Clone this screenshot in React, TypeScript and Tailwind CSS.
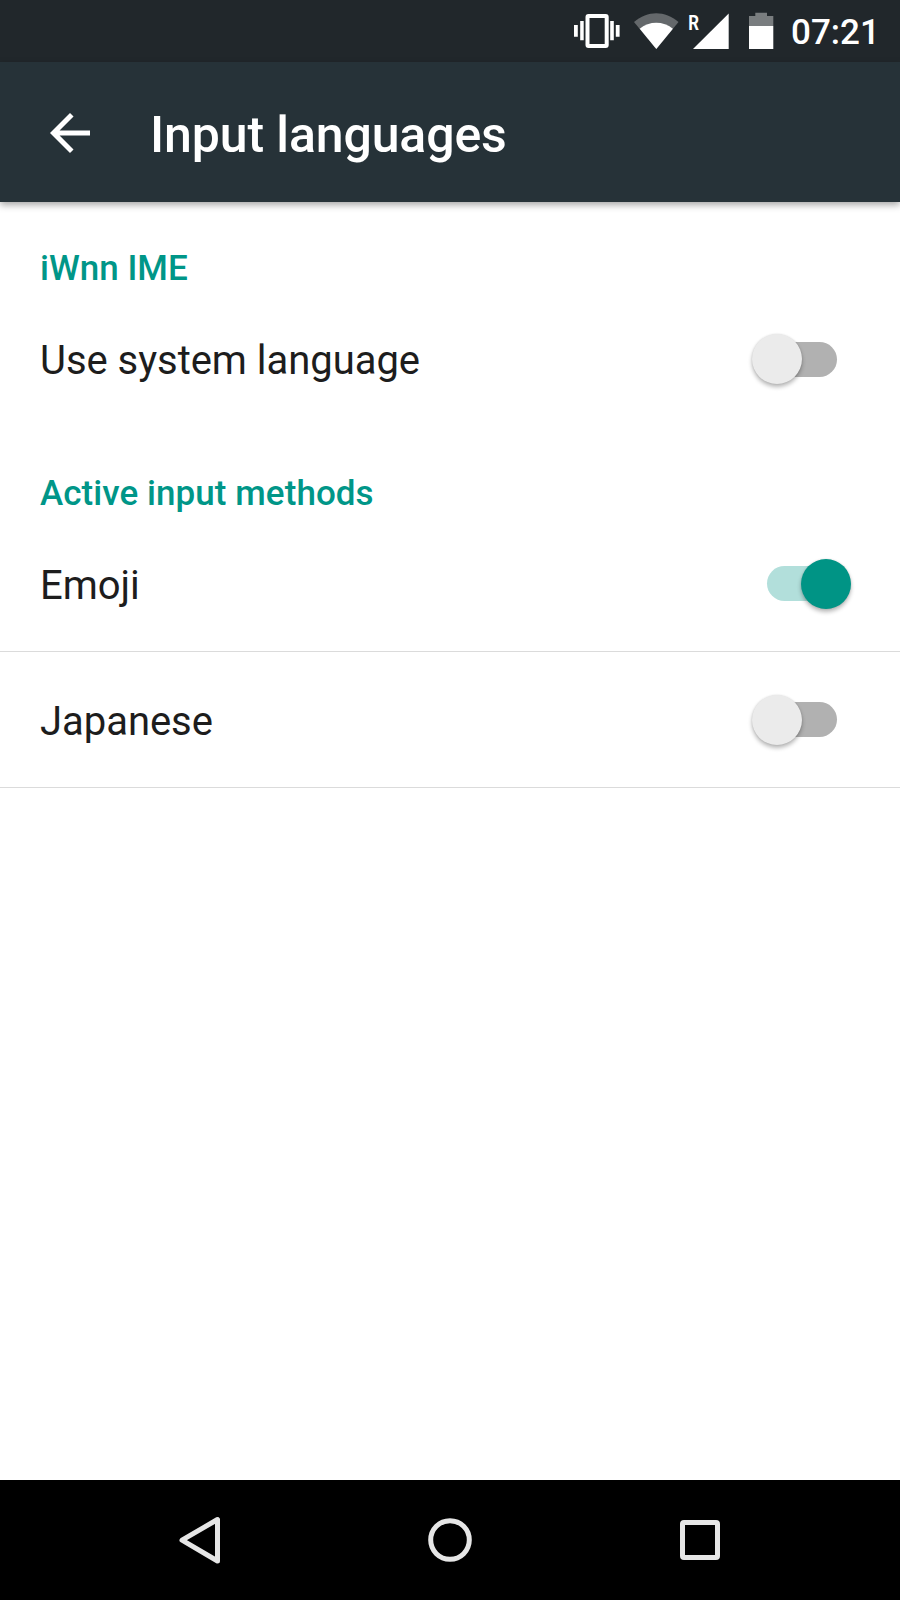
import React, { useState } from "react";

function StatusIcons() {
  return (
    <>
      <svg className="h-[62px] w-12 shrink-0" viewBox="573 0 48 62" fill="#fff">
        <path fillRule="evenodd" d="M588.500 14H605.700A3 3 0 0 1 608.700 17V45A3 3 0 0 1 605.700 48H588.500A3 3 0 0 1 585.500 45V17A3 3 0 0 1 588.500 14ZM589.500 18V44H604.700V18Z" />
        <path d="M580.200 21h3.500v19.300h-3.500zM574 25h3.800v11.700h-3.800zM610.200 21h3.600v19.300h-3.600zM615.800 25h3.800v11.700h-3.800z" />
      </svg>
      <svg className="ml-3 h-[62px] w-[46px] shrink-0" viewBox="633 0 46 62">
        <path d="M656.3 49L634 22C647.5 10.300 665 10.300 678.500 22Z" fill="#64686b" />
        <path d="M656.3 49L639.700 28.700C649.500 20.800 663 20.800 672.900 28.700Z" fill="#fff" />
      </svg>
      <svg className="ml-2 h-[62px] w-[43px] shrink-0" viewBox="687 0 43 62" fill="#fff">
        <text x="0" y="0" transform="translate(688.200 29.500) scale(0.820 1)" fontFamily="Roboto, sans-serif" fontWeight="700" fontSize="20.500">R</text>
        <path d="M693 49H728.700V13.500Z" />
      </svg>
      <svg className="ml-[18px] h-[62px] w-[27px] shrink-0" viewBox="748 0 27 62">
        <path d="M755.300 12.700H767V16H773.300V26H749V16H755.300Z" fill="#797d7f" />
        <path d="M749 26H773.300V49H749Z" fill="#fff" />
      </svg>
    </>
  );
}

function Toggle({ label, initial }: { label: string; initial: boolean }) {
  const [on, setOn] = useState(initial);
  return (
    <button
      role="switch"
      aria-checked={on}
      aria-label={label}
      onClick={() => setOn(!on)}
      className="relative h-[50px] w-[100px] shrink-0"
    >
      <span className={`absolute left-[14.500px] top-[7.5px] h-[35px] w-[70px] rounded-full ${on ? "bg-[#b2dfdb]" : "bg-[#b1b1b1]"}`} />
      <span
        className={`absolute top-0 size-[50px] rounded-full shadow-[0_3px_4px_rgba(0,0,0,0.28),0_0_2px_rgba(0,0,0,0.12)] ${
          on ? "left-[49px] bg-[#009485]" : "left-0 bg-[#ebebeb]"
        }`}
      />
    </button>
  );
}

function Row({ label, on, divider }: { label: string; on: boolean; divider?: boolean }) {
  return (
    <div className={`flex h-[136px] items-center justify-between pl-10 pr-[48px] ${divider ? "border-b border-[#dbdbdb]" : ""}`}>
      <span className="pt-1 text-[40px] leading-[48px] tracking-[-0.04px] text-[#1d1d1d]">{label}</span>
      <Toggle label={label} initial={on} />
    </div>
  );
}

function SectionTitle({ children }: { children: React.ReactNode }) {
  return <h2 className="mb-px pl-10 text-[35px] font-medium leading-[42px] text-[#009688]">{children}</h2>;
}

export default function App() {
  return (
    <div className="flex h-[1600px] w-[900px] flex-col overflow-hidden bg-white font-['Roboto',sans-serif]">
      <div className="flex h-[62px] shrink-0 items-center bg-[#21272b] pl-[573px]">
        <StatusIcons />
        <span className="ml-[16px] pt-1 text-[35px] font-medium leading-[42px] text-white">07:21</span>
      </div>
      <header className="z-10 flex h-[140px] shrink-0 items-center bg-[#263238] pl-10 pt-px shadow-[0_3px_7px_rgba(0,0,0,0.35)]">
        <svg className="size-[60px] shrink-0" viewBox="0 0 24 24" fill="#fff">
          <path d="M20 11H7.830l5.590-5.590L12 4l-8 8 8 8 1.410-1.410L7.830 13H20v-2z" />
        </svg>
        <h1 className="ml-[50px] pt-[5px] text-[50px] font-medium leading-[60px] tracking-[-0.12px] text-white">Input languages</h1>
      </header>
      <main className="flex grow flex-col">
        <section className="pt-[46px]">
          <SectionTitle>iWnn IME</SectionTitle>
          <Row label="Use system language" on={false} />
        </section>
        <section className="pt-[46px]">
          <SectionTitle>
            <span className="tracking-[0.06px]">Active input methods</span>
          </SectionTitle>
          <Row label="Emoji" on divider />
          <Row label="Japanese" on={false} divider />
        </section>
      </main>
      <nav className="flex h-[120px] shrink-0 items-center bg-black pl-[170px]">
        <svg className="size-[60px]" viewBox="170 1510 60 60" fill="none" stroke="#e6e6e6" strokeWidth="5" strokeLinejoin="round">
          <path d="M217.500 1519.500V1561L182 1540.200Z" />
        </svg>
        <svg className="ml-[190px] size-[60px]" viewBox="420 1510 60 60" fill="none" stroke="#e6e6e6" strokeWidth="5">
          <circle cx="450" cy="1540" r="19.300" />
        </svg>
        <svg className="ml-[190px] size-[60px]" viewBox="670 1510 60 60" fill="none" stroke="#e6e6e6" strokeWidth="5">
          <rect x="682.500" y="1522.500" width="35" height="35" rx="1.500" />
        </svg>
      </nav>
    </div>
  );
}
